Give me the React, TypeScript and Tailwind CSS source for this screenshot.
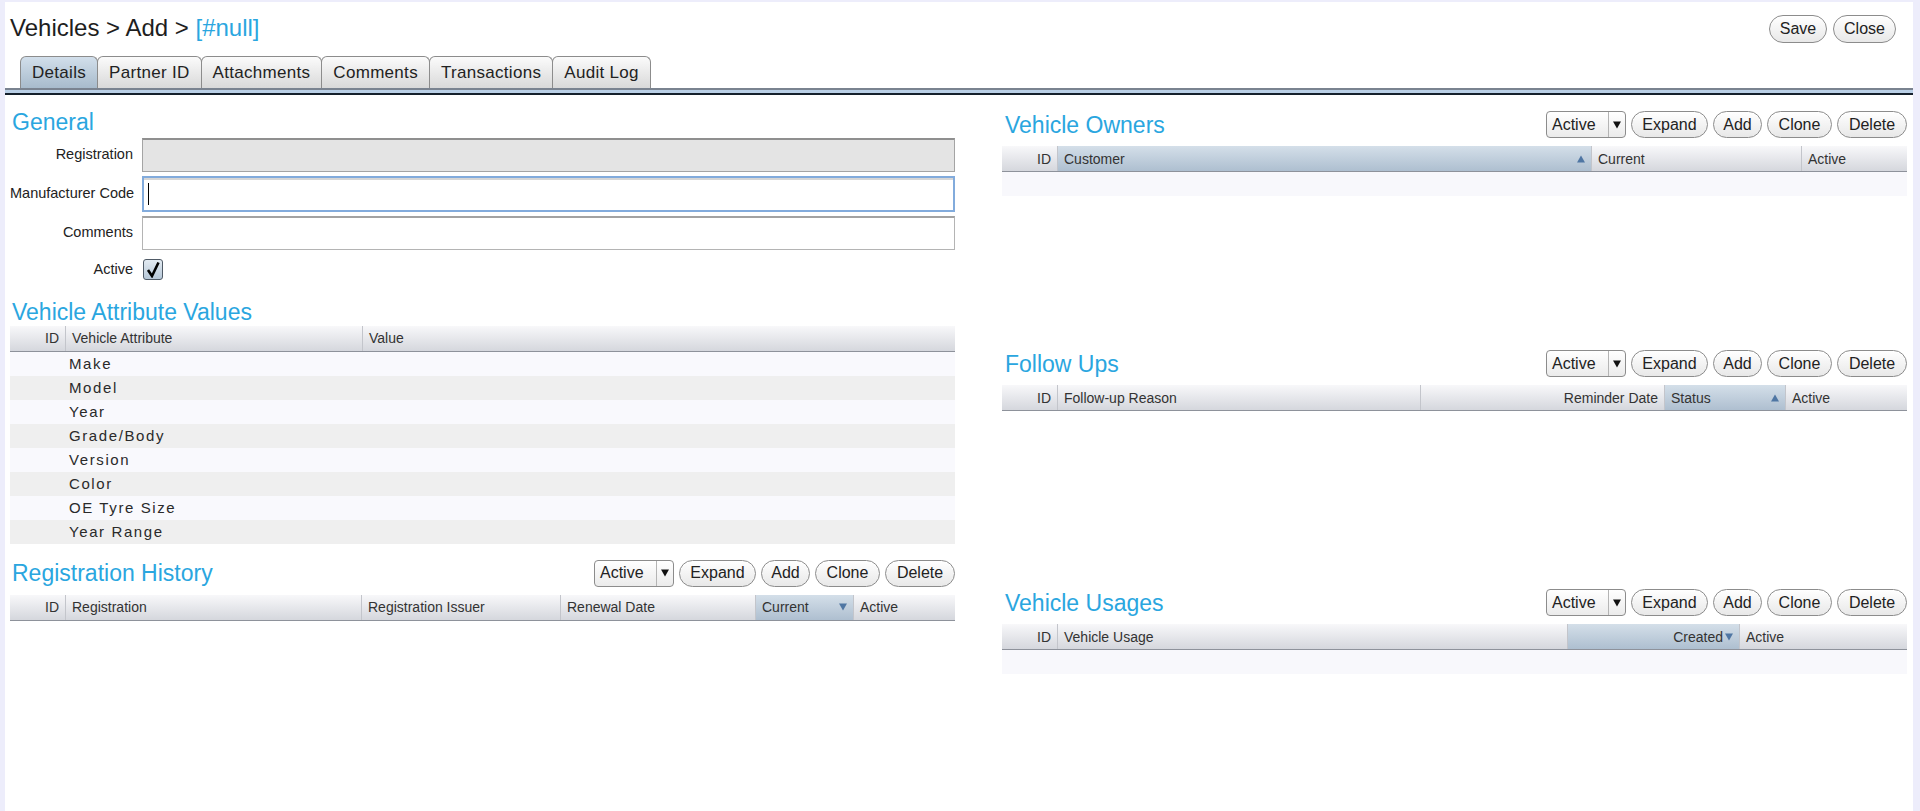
import React from 'react';

type Col = {
  label: string;
  w: string;
  align?: 'left' | 'right';
  sorted?: 'up' | 'down';
  inlineArrow?: boolean;
};

const Arrow = ({ dir, color = '#4f76a3' }: { dir: 'up' | 'down'; color?: string }) => (
  <svg width="8" height="8" viewBox="0 0 8 8" className="shrink-0">
    {dir === 'up' ? (
      <polygon points="4,0.5 8,7.5 0,7.5" fill={color} />
    ) : (
      <polygon points="0,0.5 8,0.5 4,7.5" fill={color} />
    )}
  </svg>
);

const PillButton = ({ label, w, h = 'h-[27px]' }: { label: string; w: string; h?: string }) => (
  <button
    className={`${w} ${h} rounded-full border border-[#8c8c8c] bg-linear-to-b from-white to-[#e8e8e8] text-[16px] leading-none text-[#222] shadow-[inset_0_1px_0_#fff]`}
  >
    {label}
  </button>
);

const Toolbar = () => (
  <div className="flex items-center gap-[5px]">
    <div className="flex h-[27px] w-[80px] items-stretch rounded-[4px] border border-[#8c8c8c] bg-linear-to-b from-white to-[#ebebeb]">
      <span className="flex flex-1 items-center pl-[5px] text-[16px] leading-none text-[#222]">Active</span>
      <span className="flex w-[17px] items-center justify-center border-l border-[#b4b4b4]">
        <Arrow dir="down" color="#111" />
      </span>
    </div>
    <PillButton label="Expand" w="w-[77px]" />
    <PillButton label="Add" w="w-[49px]" />
    <PillButton label="Clone" w="w-[65px]" />
    <PillButton label="Delete" w="w-[70px]" />
  </div>
);

const HeaderRow = ({ cols }: { cols: Col[] }) => (
  <div className="flex h-[26px] border-b border-[#8e929b] bg-linear-to-b from-[#f8f8fa] to-[#d5d7dd] text-[14px] leading-none text-[#333]">
    {cols.map((c, i) => (
      <div
        key={i}
        className={`${c.w} flex items-center ${i > 0 ? 'border-l border-[#c3c5cb]' : ''} ${
          c.sorted ? 'bg-linear-to-b from-[#d4dfe9] to-[#aebfd0]' : ''
        } ${c.align === 'right' ? 'justify-end pr-[6px]' : 'pl-[6px]'}`}
      >
        {c.inlineArrow ? (
          <span className="flex items-center gap-[2px]">
            {c.label}
            {c.sorted && <Arrow dir={c.sorted} />}
          </span>
        ) : (
          <>
            <span className={`flex-1 whitespace-nowrap ${c.align === 'right' ? 'text-right' : ''}`}>{c.label}</span>
            {c.sorted && (
              <span className="pr-[6px]">
                <Arrow dir={c.sorted} />
              </span>
            )}
          </>
        )}
      </div>
    ))}
  </div>
);

const Heading = ({ children }: { children: React.ReactNode }) => (
  <h2 className="h-[26px] text-[23px] leading-[26px] text-[#2aa6df]">{children}</h2>
);

const RightSection = ({ title, cols, body = true }: { title: string; cols: Col[]; body?: boolean }) => (
  <section className="h-[239px]">
    <div className="flex h-[27px] items-center justify-between pl-[3px]">
      <Heading>{title}</Heading>
      <Toolbar />
    </div>
    <div className="mt-[8px]">
      <HeaderRow cols={cols} />
      {body && <div className="h-[24px] bg-[#f8f8fc]" />}
    </div>
  </section>
);

const attributes = ['Make', 'Model', 'Year', 'Grade/Body', 'Version', 'Color', 'OE Tyre Size', 'Year Range'];

const tabs = ['Details', 'Partner ID', 'Attachments', 'Comments', 'Transactions', 'Audit Log'];

export default function App() {
  return (
    <div className="h-[811px] w-[1920px] bg-[#ededfb] pl-[5px] pr-[7px] pt-[2px] font-['Liberation_Sans',Arial,sans-serif]">
      <div className="h-full bg-white">
        {/* header */}
        <div className="flex items-start justify-between pl-[5px] pr-[17px] pt-[12px]">
          <div className="h-[28px] text-[24px] leading-[28px] text-[#1e1e1e]">
            Vehicles &gt; Add &gt; <span className="text-[#2aa6df]">[#null]</span>
          </div>
          <div className="mt-[1px] flex gap-[6px]">
            <PillButton label="Save" w="w-[58px]" h="h-[28px]" />
            <PillButton label="Close" w="w-[63px]" h="h-[28px]" />
          </div>
        </div>

        {/* tabs */}
        <div className="mt-[13px] flex pl-[15px]">
          {tabs.map((t, i) => (
            <div
              key={t}
              className={`-mr-px flex h-[32px] items-center rounded-t-[6px] border border-b-0 border-[#8c8c8c] px-[11px] text-[17px] leading-none tracking-[0.3px] text-[#222] ${
                i === 0 ? 'bg-linear-to-b from-[#d2dfeb] to-[#a8bbcc]' : 'bg-linear-to-b from-[#fbfbfb] to-[#d9d9d9]'
              }`}
            >
              {t}
            </div>
          ))}
        </div>
        <div className="h-[7px] border-b-2 border-t-2 border-b-[#15202c] border-t-[#7a8390] bg-[#bad0e7]" />

        {/* content */}
        <div className="flex gap-[47px] pl-[5px]">
          {/* left column */}
          <div className="w-[945px] pt-[14px]">
            <div className="pl-[2px]">
              <Heading>General</Heading>
            </div>
            <div className="mt-[3px] flex flex-col gap-[4px] text-[14.5px] text-[#222]">
              <div className="flex items-center gap-[9px]">
                <label className="w-[123px] text-right">Registration</label>
                <div className="h-[34px] flex-1 border border-[#a4a4a4] border-t-2 border-t-[#8f8f8f] bg-[#e4e4e4]" />
              </div>
              <div className="flex items-center gap-[9px]">
                <label className="w-[123px] whitespace-nowrap text-right">Manufacturer Code</label>
                <div className="flex h-[36px] flex-1 items-center border-2 border-[#82abdc] bg-white pl-[4px] shadow-[inset_0_2px_0_#d6d6d6]">
                  <div className="h-[22px] w-px bg-black" />
                </div>
              </div>
              <div className="flex items-center gap-[9px]">
                <label className="w-[123px] text-right">Comments</label>
                <div className="h-[34px] flex-1 border border-[#b4b4b4] border-t-2 border-t-[#a2a2a2] bg-white" />
              </div>
              <div className="mt-[5px] flex items-center gap-[10px]">
                <label className="w-[123px] text-right">Active</label>
                <div className="flex h-[21px] w-[20px] items-center justify-center rounded-[3px] border border-[#4f5a66] bg-linear-to-b from-[#e3ebf2] to-[#b6c7d7]">
                  <svg width="16" height="17" viewBox="0 0 16 17">
                    <path d="M3 9 L7 15 L13.5 1.5" stroke="#000" strokeWidth="2.6" fill="none" strokeLinejoin="miter" />
                  </svg>
                </div>
              </div>
            </div>

            <div className="mt-[18px] pl-[2px]">
              <Heading>Vehicle Attribute Values</Heading>
            </div>
            <div className="mt-[1px]">
              <HeaderRow
                cols={[
                  { label: 'ID', w: 'w-[55px]', align: 'right' },
                  { label: 'Vehicle Attribute', w: 'w-[297px]' },
                  { label: 'Value', w: 'flex-1' },
                ]}
              />
              {attributes.map((a, i) => (
                <div
                  key={a}
                  className={`flex h-[24px] items-center pl-[59px] text-[15px] leading-none tracking-[1.6px] text-[#2a2a2a] ${
                    i % 2 === 0 ? 'bg-[#f9f9fd]' : 'bg-[#efefef]'
                  }`}
                >
                  {a}
                </div>
              ))}
            </div>

            <div className="mt-[16px] flex h-[27px] items-center justify-between pl-[2px]">
              <Heading>Registration History</Heading>
              <Toolbar />
            </div>
            <div className="mt-[8px]">
              <HeaderRow
                cols={[
                  { label: 'ID', w: 'w-[55px]', align: 'right' },
                  { label: 'Registration', w: 'w-[296px]' },
                  { label: 'Registration Issuer', w: 'w-[199px]' },
                  { label: 'Renewal Date', w: 'w-[195px]' },
                  { label: 'Current', w: 'w-[98px]', sorted: 'down' },
                  { label: 'Active', w: 'flex-1' },
                ]}
              />
            </div>
          </div>

          {/* right column */}
          <div className="w-[905px] pt-[16px]">
            <RightSection
              title="Vehicle Owners"
              cols={[
                { label: 'ID', w: 'w-[55px]', align: 'right' },
                { label: 'Customer', w: 'w-[534px]', sorted: 'up' },
                { label: 'Current', w: 'w-[210px]' },
                { label: 'Active', w: 'flex-1' },
              ]}
            />
            <RightSection
              title="Follow Ups"
              body={false}
              cols={[
                { label: 'ID', w: 'w-[55px]', align: 'right' },
                { label: 'Follow-up Reason', w: 'w-[363px]' },
                { label: 'Reminder Date', w: 'w-[244px]', align: 'right' },
                { label: 'Status', w: 'w-[121px]', sorted: 'up' },
                { label: 'Active', w: 'flex-1' },
              ]}
            />
            <RightSection
              title="Vehicle Usages"
              cols={[
                { label: 'ID', w: 'w-[55px]', align: 'right' },
                { label: 'Vehicle Usage', w: 'w-[510px]' },
                { label: 'Created', w: 'w-[172px]', align: 'right', sorted: 'down', inlineArrow: true },
                { label: 'Active', w: 'flex-1' },
              ]}
            />
          </div>
        </div>
      </div>
    </div>
  );
}
